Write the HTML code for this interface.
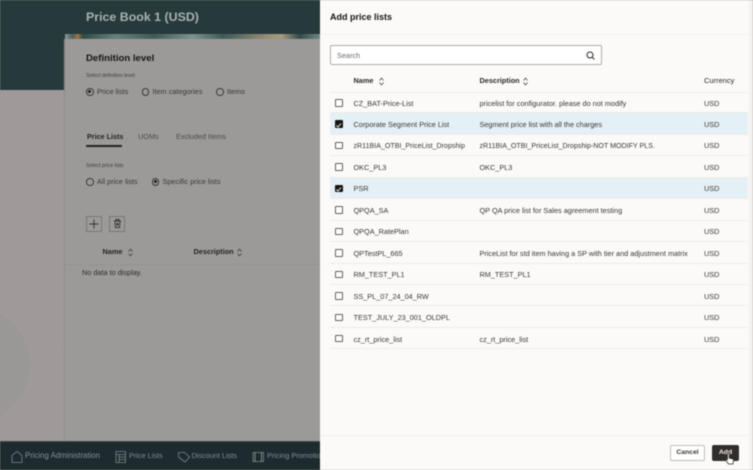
<!DOCTYPE html>
<html><head><meta charset="utf-8"><style>
*{box-sizing:border-box}
html,body{margin:0;padding:0;width:753px;height:470px;overflow:hidden;background:#9e9a98;font-family:"Liberation Sans",sans-serif}
.a{position:absolute;white-space:nowrap}
#root{position:absolute;left:0;top:0;width:753px;height:470px;overflow:hidden;filter:blur(.4px)}
.l{font-size:7.3px;color:#3a3836;line-height:10px}
.h{font-size:7.3px;color:#161513;font-weight:bold;line-height:10px}
.r{left:330px;width:418px;height:21.45px;border-bottom:1px solid #eeece9}
.r.s{background:#e4f0f5}
.cb{position:absolute;left:5px;top:7px;width:7.5px;height:7.5px;border:1px solid #65625f;background:#fff;border-radius:1px}
.s .cb{background:#161513;border-color:#161513}
.n,.d,.c{position:absolute;top:6.6px;font-size:7.3px;line-height:10px;color:#3a3836;white-space:nowrap}
.n{left:23.5px}.d{left:149.5px}.c{left:374px}
.rad{position:absolute;width:7.5px;height:7.5px;border:1px solid #3a3836;border-radius:50%}
.rad.on::after{content:"";position:absolute;left:1.2px;top:1.2px;width:3.2px;height:3.2px;background:#1c1a19;border-radius:50%}
</style></head><body><div id="root">
<div class="a" style="left:0;top:0;width:320px;height:90px;background:#26393b"></div>
<div class="a" style="left:0;top:90px;width:320px;height:350px;background:#9f9a99"></div>
<svg class="a" style="left:0;top:240px" width="65" height="200"><circle cx="-30" cy="125" r="60" fill="#9a9896"/><circle cx="5" cy="110" r="58" fill="none" stroke="#9f9d9b" stroke-width=".5"/></svg>
<div class="a" style="left:65px;top:34px;width:255px;height:6px;background:linear-gradient(90deg,#8a9a96 0,#47605d 3%,#a4713c 5%,#2f4a48 7%,#66807a 20%,#3f5a58 35%,#7d928c 50%,#3f5a58 62%,#9b9176 80%,#a49a7e 85%,#2f4a48 92%,#72897f 100%)"></div>
<div class="a" style="left:65px;top:39px;width:255px;height:402px;background:#9c9a98;box-shadow:-1px 0 1px #908e8c"></div>
<div class="a" style="left:86px;top:9.5px;font-size:12.4px;line-height:15px;font-weight:bold;color:#a9b2b0">Price Book 1 (USD)</div>
<div class="a" style="left:86px;top:53px;font-size:9.6px;line-height:12px;font-weight:bold;color:#161513">Definition level</div>
<div class="a" style="left:86px;top:72px;font-size:5.2px;line-height:8px;color:#3e3c3a">Select definition level</div>
<span class="rad on a" style="left:86px;top:88px"></span><div class="a l" style="left:97px;top:86.5px">Price lists</div>
<span class="rad a" style="left:141.5px;top:88px"></span><div class="a l" style="left:152.5px;top:86.5px">Item categories</div>
<span class="rad a" style="left:216px;top:88px"></span><div class="a l" style="left:227px;top:86.5px">Items</div>
<div class="a" style="left:87px;top:132px;font-size:7.2px;line-height:10px;font-weight:bold;color:#252321">Price Lists</div>
<div class="a" style="left:86px;top:145px;width:36px;height:1.5px;background:#25231f"></div>
<div class="a l" style="left:138px;top:132px;color:#4e4c4a">UOMs</div>
<div class="a l" style="left:176px;top:132px;color:#4e4c4a">Excluded Items</div>
<div class="a" style="left:86px;top:162px;font-size:5.2px;line-height:8px;color:#3e3c3a">Select price lists</div>
<span class="rad a" style="left:86px;top:178px"></span><div class="a l" style="left:97px;top:176.5px">All price lists</div>
<span class="rad on a" style="left:151.5px;top:178px"></span><div class="a l" style="left:162.5px;top:176.5px">Specific price lists</div>
<svg class="a" style="left:86px;top:216px" width="40" height="17" fill="none" stroke="#33312f"><rect x=".5" y=".5" width="15" height="15" stroke="#7a7876"/><path d="M8 3.5v9M3.5 8h9" stroke-width=".9"/><rect x="23.5" y=".5" width="15" height="15" stroke="#7a7876"/><path d="M28 5h7M29 5l.4 6.5h4.2L34 5M30 5V3.5h3V5" stroke-width=".9"/><path d="M30.500 7h2v2.500h-2z" fill="#33312f" stroke="none"/></svg>
<div class="a h" style="left:102.500px;top:247px;color:#262422">Name</div>
<svg class="a" style="left:127px;top:248px" width="7" height="9" fill="none" stroke="#3a3836" stroke-width=".7"><path d="M1.500 3.500 3.500 1l2 2.500M1.500 5.500l2 2.500 2-2.500"/></svg>
<div class="a h" style="left:193.500px;top:247px;color:#262422">Description</div>
<svg class="a" style="left:236px;top:248px" width="7" height="9" fill="none" stroke="#3a3836" stroke-width=".7"><path d="M1.500 3.500 3.500 1l2 2.500M1.500 5.500l2 2.500 2-2.500"/></svg>
<div class="a" style="left:65px;top:264px;width:255px;height:1px;background:#959391"></div>
<div class="a l" style="left:82px;top:268px;color:#302e2c">No data to display.</div>
<div class="a" style="left:0;top:441px;width:320px;height:29px;background:#1d2a2e;border-top:1px solid #3c4a4d"></div>
<svg class="a" style="left:10px;top:449px" width="260" height="16" fill="none" stroke="#7d8789" stroke-width=".8"><path d="M2 13.500V6.500L7 2.500l5 4v7z"/><path d="M106 2.500h9.500v11H106zM106 5.500h9.500M109 5.500v8M109 8h6.500M109 10.500h6.500"/><path d="M168.500 3.500h6l5 4.500-4.500 5-6.500-5z"/><rect x="243" y="3.500" width="10.500" height="9"/><path d="M245 3.500v9M251.500 3.500v9" stroke-width="1.100"/></svg>
<div class="a l" style="left:25px;top:451px;font-size:7.8px;color:#859092">Pricing Administration</div>
<div class="a l" style="left:129px;top:451px;color:#859092">Price Lists</div>
<div class="a l" style="left:191.500px;top:451px;color:#859092">Discount Lists</div>
<div class="a l" style="left:267px;top:451px;width:53px;overflow:hidden;color:#859092">Pricing Promotions</div>

<div class="a" style="left:320px;top:0;width:433px;height:470px;background:#fbfaf9"></div>
<div class="a" style="left:320px;top:34px;width:433px;height:1px;background:#f3f1ee"></div>
<div class="a" style="left:749px;top:0;width:4px;height:470px;background:#f3f1ef"></div>
<div class="a" style="left:330px;top:11px;font-size:9px;line-height:12px;font-weight:bold;color:#161513">Add price lists</div>
<div class="a" style="left:330px;top:45px;width:272px;height:20px;background:#fff;border:1px solid #b0ada9;border-radius:2px"></div>
<div class="a" style="left:337px;top:50.500px;font-size:7.300px;line-height:10px;color:#6f6c69">Search</div>
<svg class="a" style="left:585px;top:49.500px" width="11" height="11" fill="none" stroke="#2c2a28" stroke-width="1"><circle cx="5" cy="5" r="3"/><path d="M7.200 7.200 9.500 9.500"/></svg>
<div class="a h" style="left:353.500px;top:75.500px;color:#2c2a28">Name</div>
<svg class="a" style="left:378px;top:76.500px" width="7" height="9" fill="none" stroke="#3a3836" stroke-width=".7"><path d="M1.500 3.500 3.500 1l2 2.500M1.500 5.500l2 2.500 2-2.500"/></svg>
<div class="a h" style="left:479.500px;top:75.500px;color:#2c2a28">Description</div>
<svg class="a" style="left:522px;top:76.500px" width="7" height="9" fill="none" stroke="#3a3836" stroke-width=".7"><path d="M1.500 3.500 3.500 1l2 2.500M1.500 5.500l2 2.500 2-2.500"/></svg>
<div class="a" style="left:704px;top:75.500px;font-size:7.500px;line-height:10px;color:#2c2a28">Currency</div>
<div class="a" style="left:330px;top:91.500px;width:418px;height:1px;background:#eeece9"></div>

<div class="a r" style="top:92px"><span class="cb"></span><span class="n">CZ_BAT-Price-List</span><span class="d">pricelist for configurator. please do not modify</span><span class="c">USD</span></div>
<div class="a r s" style="top:113.450px"><span class="cb"></span><span class="n">Corporate Segment Price List</span><span class="d">Segment price list with all the charges</span><span class="c">USD</span></div>
<div class="a r" style="top:134.900px"><span class="cb"></span><span class="n" style="font-size:7.100px">zR11BIA_OTBI_PriceList_Dropship</span><span class="d" style="font-size:7.100px">zR11BIA_OTBI_PriceList_Dropship-NOT MODIFY PLS.</span><span class="c">USD</span></div>
<div class="a r" style="top:156.350px"><span class="cb"></span><span class="n">OKC_PL3</span><span class="d">OKC_PL3</span><span class="c">USD</span></div>
<div class="a r s" style="top:177.800px"><span class="cb"></span><span class="n">PSR</span><span class="c">USD</span></div>
<div class="a r" style="top:199.250px"><span class="cb"></span><span class="n">QPQA_SA</span><span class="d">QP QA price list for Sales agreement testing</span><span class="c">USD</span></div>
<div class="a r" style="top:220.700px"><span class="cb"></span><span class="n">QPQA_RatePlan</span><span class="c">USD</span></div>
<div class="a r" style="top:242.150px"><span class="cb"></span><span class="n">QPTestPL_665</span><span class="d">PriceList for std item having a SP with tier and adjustment matrix</span><span class="c">USD</span></div>
<div class="a r" style="top:263.600px"><span class="cb"></span><span class="n">RM_TEST_PL1</span><span class="d">RM_TEST_PL1</span><span class="c">USD</span></div>
<div class="a r" style="top:285.050px"><span class="cb"></span><span class="n">SS_PL_07_24_04_RW</span><span class="c">USD</span></div>
<div class="a r" style="top:306.500px"><span class="cb"></span><span class="n">TEST_JULY_23_001_OLDPL</span><span class="c">USD</span></div>
<div class="a r" style="top:327.950px"><span class="cb"></span><span class="n">cz_rt_price_list</span><span class="d">cz_rt_price_list</span><span class="c">USD</span></div>
<svg class="a" style="left:334px;top:119.500px" width="10" height="80" fill="none" stroke="#fff" stroke-width=".9"><path d="M2.500 5.500 4 7l3-3.500"/><path d="M2.500 69.500 4 71l3-3.500"/></svg>

<div class="a" style="left:320px;top:435px;width:429px;height:1px;background:#f1efec"></div>
<div class="a" style="left:670px;top:445px;width:35px;height:16px;background:#fff;border:1px solid #c0bdb9;border-radius:2px;font-size:6.800px;font-weight:bold;line-height:14px;text-align:center;color:#3a3836">Cancel</div>
<div class="a" style="left:712px;top:445px;width:27px;height:16px;background:#312d2a;border-radius:2px;font-size:6.800px;font-weight:bold;line-height:16px;text-align:center;color:#f3f1ee">Add</div>
<svg class="a" style="left:725px;top:452px" width="10" height="15"><path d="M2.500 1.500c.8-.8 1.700-.4 1.700.6v4l3 .7c1 .2 1.500.8 1.300 1.800l-.6 3.400H3.500L1 8.500c-.4-.8.500-1.500 1.500-.8z" fill="#fff" stroke="#312d2a" stroke-width=".8"/></svg>
</div></body></html>
